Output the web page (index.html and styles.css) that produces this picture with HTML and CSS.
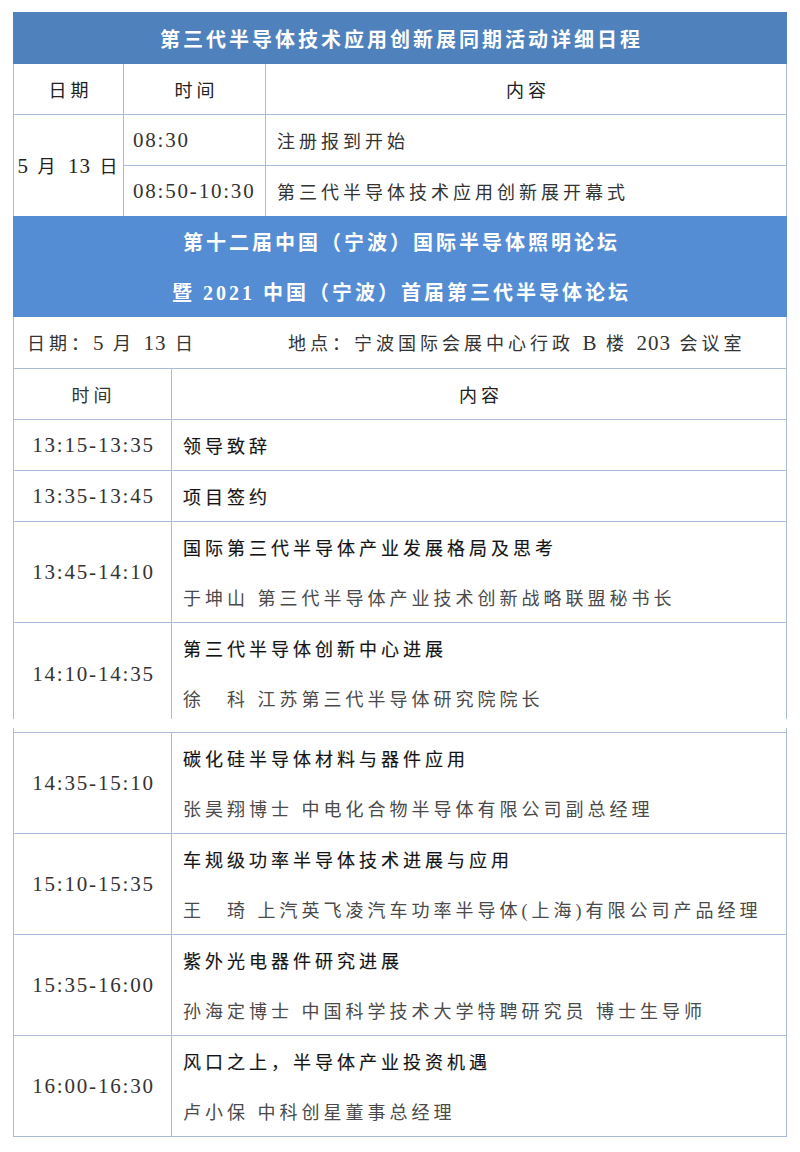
FILE: index.html
```html
<!DOCTYPE html>
<html lang="zh-CN">
<head>
<meta charset="utf-8">
<title>第三代半导体技术应用创新展同期活动详细日程</title>
<link rel="stylesheet" href="styles.css">
</head>
<body>
<div class="page">
  <section class="part part-top">
    <div class="band band-dark"><div class="band-line">第三代半导体技术应用创新展同期活动详细日程</div></div>
    <div class="t1">
      <div class="c c1 head">日期</div>
      <div class="c c2 head">时间</div>
      <div class="c c3 head">内容</div>
      <div class="c c1 date"><span class="date-text"><span class="n">5</span> 月 <span class="n">13</span> 日</span></div>
      <div class="c c2 txt num">08:30</div>
      <div class="c c3 txt">注册报到开始</div>
      <div class="c c2 txt num">08:50-10:30</div>
      <div class="c c3 txt">第三代半导体技术应用创新展开幕式</div>
    </div>
    <div class="band band-light">
      <div class="band-line">第十二届中国（宁波）国际半导体照明论坛</div>
      <div class="band-line">暨 2021 中国（宁波）首届第三代半导体论坛</div>
    </div>
    <div class="info">
      <span class="info-date">日期：<span class="n">5</span> 月 <span class="n">13</span> 日</span>
      <span class="info-place">地点：宁波国际会展中心行政 <span class="n">B</span> 楼 <span class="n">203</span> 会议室</span>
    </div>
    <div class="t2">
      <div class="time head">时间</div>
      <div class="content head-c"><div class="ln">内容</div></div>

      <div class="time num">13:15-13:35</div>
      <div class="content"><div class="ln ttl">领导致辞</div></div>

      <div class="time num">13:35-13:45</div>
      <div class="content"><div class="ln ttl">项目签约</div></div>

      <div class="time num">13:45-14:10</div>
      <div class="content"><div class="ln ttl">国际第三代半导体产业发展格局及思考</div><div class="ln who">于坤山 第三代半导体产业技术创新战略联盟秘书长</div></div>

      <div class="time num cut-time">14:10-14:35</div>
      <div class="content cut"><div class="ln ttl">第三代半导体创新中心进展</div><div class="ln who">徐　科 江苏第三代半导体研究院院长</div></div>
    </div>
  </section>

  <section class="part part-bottom">
    <div class="t2">
      <div class="time num">14:35-15:10</div>
      <div class="content"><div class="ln ttl">碳化硅半导体材料与器件应用</div><div class="ln who">张昊翔博士 中电化合物半导体有限公司副总经理</div></div>

      <div class="time num">15:10-15:35</div>
      <div class="content"><div class="ln ttl">车规级功率半导体技术进展与应用</div><div class="ln who">王　琦 上汽英飞凌汽车功率半导体(上海)有限公司产品经理</div></div>

      <div class="time num">15:35-16:00</div>
      <div class="content"><div class="ln ttl">紫外光电器件研究进展</div><div class="ln who">孙海定博士 中国科学技术大学特聘研究员 博士生导师</div></div>

      <div class="time num">16:00-16:30</div>
      <div class="content"><div class="ln ttl">风口之上，半导体产业投资机遇</div><div class="ln who">卢小保 中科创星董事总经理</div></div>
    </div>
  </section>
</div>
</body>
</html>
```

FILE: styles.css
```css
* {
  box-sizing: border-box;
}

html, body {
  margin: 0;
  padding: 0;
  background: #ffffff;
}

body {
  font-family: "Liberation Serif", "Noto Sans CJK SC", serif;
  font-size: 18px;
  letter-spacing: 4px;
  color: #2e2e2e;
}

.page {
  padding-top: 12px;
  width: 800px;
}

.part {
  margin-left: 13px;
  width: 774px;
  border-left: 1px solid #a9bdd8;
  border-right: 1px solid #a9bdd8;
}

.part-bottom {
  margin-top: 9px;
  padding-top: 4px;
  border-bottom: 1px solid #a9bdd8;
}

.band {
  margin: 0 -1px;
  color: #ffffff;
  font-weight: bold;
  font-size: 20px;
  letter-spacing: 3px;
  display: flex;
  flex-direction: column;
}

.band-dark {
  background: #4f81bd;
  height: 52px;
}

.band-light {
  background: #548dd4;
  height: 101px;
}

.band-line {
  flex: 1;
  display: flex;
  align-items: center;
  justify-content: center;
  padding-left: 3px;
  white-space: nowrap;
}

.n {
  font-size: 21px;
  letter-spacing: 1px;
}

.num {
  font-size: 21px;
  letter-spacing: 1.8px;
}

.t1 {
  display: grid;
  grid-template-columns: 109px 142px 1fr;
  grid-template-rows: 50px 51px 51px;
}

.c {
  display: flex;
  align-items: center;
  white-space: nowrap;
}

.c2, .c3 {
  border-left: 1px solid #a9bdd8;
}

.head {
  justify-content: center;
  padding-left: 4px;
  color: #222222;
}

.date {
  grid-row: 2 / span 2;
  border-top: 1px solid #a9bdd8;
  justify-content: center;
  padding-left: 2px;
  color: #222222;
}

.date-text {
  white-space: nowrap;
}

.txt {
  border-top: 1px solid #a9bdd8;
  color: #333333;
}

.c2.txt {
  padding-left: 9px;
}

.c3.txt {
  padding-left: 11px;
}

.info {
  height: 51px;
  display: grid;
  grid-template-columns: 261px 1fr;
  align-items: center;
  padding-left: 13px;
  color: #333333;
  white-space: nowrap;
}

.t2 {
  display: grid;
  grid-template-columns: 157px 1fr;
}

.time {
  border-top: 1px solid #a9bdd8;
  display: flex;
  align-items: center;
  justify-content: center;
  padding-left: 2px;
  color: #333333;
  white-space: nowrap;
}

.content {
  border-top: 1px solid #a9bdd8;
  border-left: 1px solid #a9bdd8;
  padding-left: 11px;
  display: flex;
  flex-direction: column;
}

.head-c {
  padding-left: 0;
}

.head-c .ln {
  justify-content: center;
  padding-left: 4px;
  color: #222222;
}

.ln {
  height: 50px;
  flex: none;
  display: flex;
  align-items: center;
  white-space: nowrap;
}

.ttl {
  color: #141414;
  -webkit-text-stroke: 0.15px #141414;
}

.who {
  color: #4a4a4a;
}

.cut {
  height: 97px;
  overflow: hidden;
}

.cut-time {
  height: 97px;
  padding-top: 6px;
}
```
